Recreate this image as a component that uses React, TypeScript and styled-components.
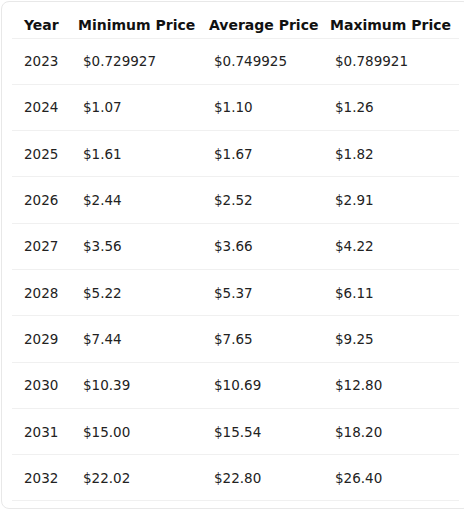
import React from "react";
import styled, { createGlobalStyle } from "styled-components";

const Global = createGlobalStyle`
  html, body { margin: 0; padding: 0; background: #ffffff; }
  body { font-family: "DejaVu Sans", "Liberation Sans", sans-serif; overflow: hidden; }
`;

const Card = styled.div`
  margin: 1px 0 0 1px;
  width: 470px;
  height: 508px;
  box-sizing: border-box;
  border: 1px solid #e8e8e8;
  border-radius: 8px;
  padding: 8px 10px 0 10px;
  background: #fff;
`;

const Table = styled.table`
  width: 447px;
  border-collapse: collapse;
  table-layout: fixed;
`;

const HeadCell = styled.th<{ $first?: boolean }>`
  height: 28px;
  padding: 2px 0 0 ${(p) => (p.$first ? 12 : 6)}px;
  box-sizing: border-box;
  text-align: left;
  font-size: 14px;
  font-weight: 700;
  color: #111;
  white-space: nowrap;
  border-bottom: 1px solid #f0f0f0;
  vertical-align: middle;
`;

const Row = styled.tr`
  height: 46.3px;
`;

const Cell = styled.td<{ $first?: boolean }>`
  padding: 0 0 0 ${(p) => (p.$first ? 12 : 11)}px;
  font-size: 13.5px;
  font-weight: 400;
  color: #222;
  white-space: nowrap;
  border-bottom: 1px solid #f0f0f0;
  vertical-align: middle;
`;

const data: [string, string, string, string][] = [
  ["2023", "$0.729927", "$0.749925", "$0.789921"],
  ["2024", "$1.07", "$1.10", "$1.26"],
  ["2025", "$1.61", "$1.67", "$1.82"],
  ["2026", "$2.44", "$2.52", "$2.91"],
  ["2027", "$3.56", "$3.66", "$4.22"],
  ["2028", "$5.22", "$5.37", "$6.11"],
  ["2029", "$7.44", "$7.65", "$9.25"],
  ["2030", "$10.39", "$10.69", "$12.80"],
  ["2031", "$15.00", "$15.54", "$18.20"],
  ["2032", "$22.02", "$22.80", "$26.40"],
];

export default function App() {
  return (
    <>
      <Global />
      <Card>
        <Table>
          <colgroup>
            <col style={{ width: 60 }} />
            <col style={{ width: 131 }} />
            <col style={{ width: 121 }} />
            <col style={{ width: 135 }} />
          </colgroup>
          <thead>
            <tr>
              <HeadCell $first>Year</HeadCell>
              <HeadCell>Minimum Price</HeadCell>
              <HeadCell>Average Price</HeadCell>
              <HeadCell>Maximum Price</HeadCell>
            </tr>
          </thead>
          <tbody>
            {data.map((r) => (
              <Row key={r[0]}>
                <Cell $first>{r[0]}</Cell>
                <Cell>{r[1]}</Cell>
                <Cell>{r[2]}</Cell>
                <Cell>{r[3]}</Cell>
              </Row>
            ))}
          </tbody>
        </Table>
      </Card>
    </>
  );
}
